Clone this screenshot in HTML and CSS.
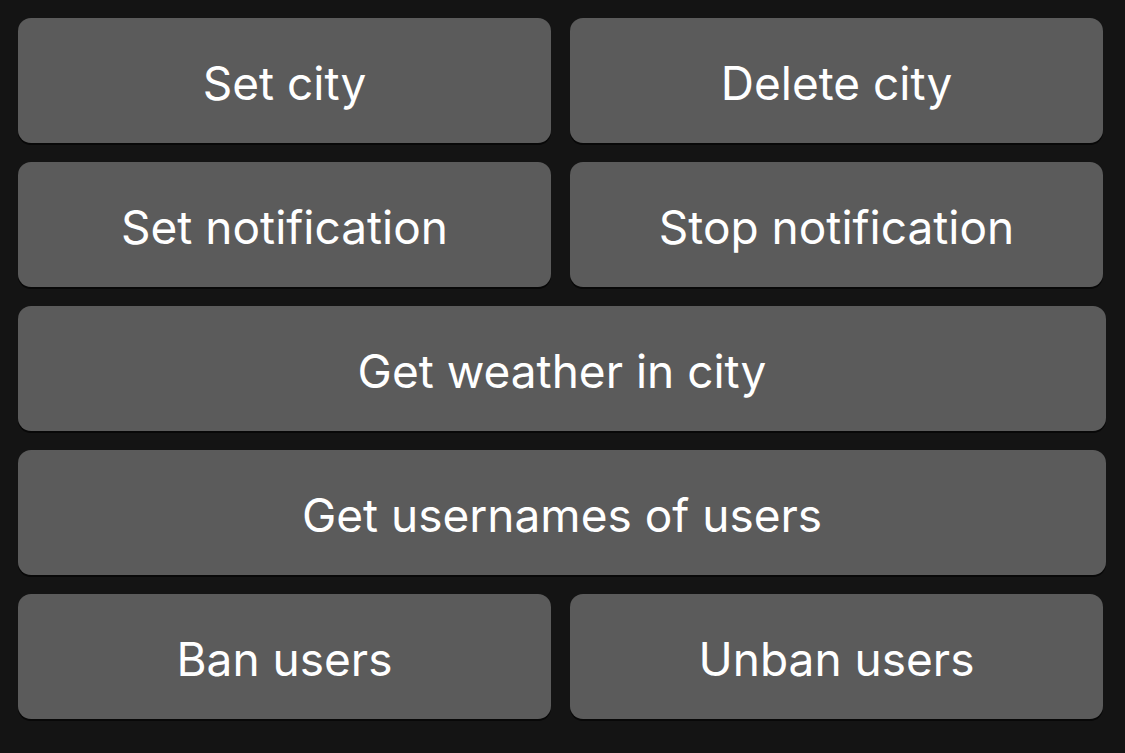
FILE: index.html
```html
<!DOCTYPE html>
<html>
<head>
<meta charset="utf-8">
<link rel="stylesheet" href="styles.css">
</head>
<body>
<div class="keyboard">
  <div class="row">
    <button class="key">Set city</button>
    <button class="key">Delete city</button>
  </div>
  <div class="row">
    <button class="key">Set notification</button>
    <button class="key">Stop notification</button>
  </div>
  <div class="row wide">
    <button class="key">Get weather in city</button>
  </div>
  <div class="row wide">
    <button class="key">Get usernames of users</button>
  </div>
  <div class="row">
    <button class="key">Ban users</button>
    <button class="key">Unban users</button>
  </div>
</div>
</body>
</html>
```
FILE: styles.css
```css
html, body {
  margin: 0;
  padding: 0;
  background: #141414;
  width: 1125px;
  height: 753px;
  overflow: hidden;
}
.keyboard {
  display: flex;
  flex-direction: column;
  gap: 19px;
  padding: 18px 22px 0 18px;
}
.row {
  display: flex;
  gap: 19px;
}
.row.wide {
  margin-right: -3px;
}
.key {
  flex: 1;
  height: 125px;
  border: none;
  border-radius: 13px;
  background: #5b5b5b;
  color: #ffffff;
  font-family: Inter, "Noto Sans", sans-serif;
  font-size: 46px;
  font-weight: 400;
  box-shadow: 0 2px 0 #080808;
  padding: 4px 0 0 0;
  margin: 0;
}
```
